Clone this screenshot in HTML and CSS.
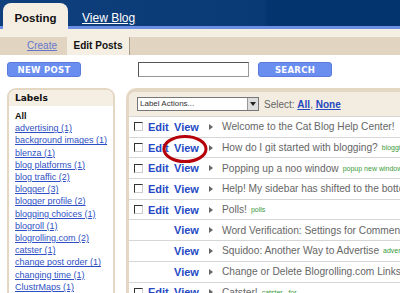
FILE: index.html
```html
<!DOCTYPE html>
<html lang="en">
<head>
    <meta charset="UTF-8">
    <title>Blogger - Edit Posts</title>
    <link rel="stylesheet" href="styles.css">
</head>
<body>
    <div class="topbar">
        <div class="tab active">Posting</div>
        <a class="tab tab-link" href="#">View Blog</a>
    </div>
    <div class="strip"></div>
    <div class="subnav">
        <a class="sub-link" href="#">Create</a>
        <div class="sub-tab">Edit Posts</div>
    </div>

    <div class="toolbar">
        <button class="btn">NEW POST</button>
        <input class="search-box" type="text">
        <button class="btn btn-search">SEARCH</button>
    </div>

    <div class="content">
        <div class="labels">
            <div class="labels-head">Labels</div>
            <ul class="label-list">
                <li class="all">All</li>
                <li><a href="#">advertising (1)</a></li>
                <li><a href="#">background images (1)</a></li>
                <li><a href="#">blenza (1)</a></li>
                <li><a href="#">blog platforms (1)</a></li>
                <li><a href="#">blog traffic (2)</a></li>
                <li><a href="#">blogger (3)</a></li>
                <li><a href="#">blogger profile (2)</a></li>
                <li><a href="#">blogging choices (1)</a></li>
                <li><a href="#">blogroll (1)</a></li>
                <li><a href="#">blogrolling.com (2)</a></li>
                <li><a href="#">catster (1)</a></li>
                <li><a href="#">change post order (1)</a></li>
                <li><a href="#">changing time (1)</a></li>
                <li><a href="#">ClustrMaps (1)</a></li>
            </ul>
        </div>

        <div class="posts">
            <div class="posts-head">
                <div class="select-box">Label Actions...<span class="drop"></span></div>
                <span class="select-txt">Select: <a href="#">All</a>, <a href="#">None</a></span>
            </div>
            <div class="row"><span class="cb"></span><a class="edit" href="#">Edit</a><a class="view" href="#">View</a><span class="arrow"></span><span class="title">Welcome to the Cat Blog Help Center!</span></div>
            <div class="row"><span class="cb"></span><a class="edit" href="#">Edit</a><a class="view" href="#">View</a><span class="arrow"></span><span class="title">How do I git started with blogging?</span><span class="tag">blogging</span></div>
            <div class="row"><span class="cb"></span><a class="edit" href="#">Edit</a><a class="view" href="#">View</a><span class="arrow"></span><span class="title">Popping up a noo window</span><span class="tag">popup new window</span></div>
            <div class="row"><span class="cb"></span><a class="edit" href="#">Edit</a><a class="view" href="#">View</a><span class="arrow"></span><span class="title">Help! My sidebar has shifted to the bottom</span></div>
            <div class="row"><span class="cb"></span><a class="edit" href="#">Edit</a><a class="view" href="#">View</a><span class="arrow"></span><span class="title">Polls!</span><span class="tag">polls</span></div>
            <div class="row"><span class="cb none"></span><span class="edit"></span><a class="view" href="#">View</a><span class="arrow"></span><span class="title">Word Verification: Settings for Comments</span></div>
            <div class="row"><span class="cb none"></span><span class="edit"></span><a class="view" href="#">View</a><span class="arrow"></span><span class="title">Squidoo: Another Way to Advertise</span><span class="tag">advertising</span></div>
            <div class="row"><span class="cb none"></span><span class="edit"></span><a class="view" href="#">View</a><span class="arrow"></span><span class="title">Change or Delete Blogrolling.com Links</span></div>
            <div class="row"><span class="cb"></span><a class="edit" href="#">Edit</a><a class="view" href="#">View</a><span class="arrow"></span><span class="title">Catster!</span><span class="tag">catster , for</span></div>
        </div>
    </div>

    <!-- red circle drawn over the second View link -->
    <svg class="circle-mark" width="50" height="32" viewBox="0 0 50 32">
        <ellipse cx="25" cy="16" rx="21" ry="12.5" fill="none" stroke="#b5000a" stroke-width="3"/>
    </svg>
</body>
</html>
```

FILE: styles.css
```css
body {
    margin: 0;
    background: #fff;
    font-family: "Liberation Sans", Arial, sans-serif;
    width: 400px;
    height: 293px;
    overflow: hidden;
    position: relative;
}

a {
    color: #2447c0;
}

.topbar {
    height: 26px;
    border-bottom: 3px solid #6a8fe3;
    background: linear-gradient(to right, #0f3f7c 0%, #0a3a76 66%, #04346d 67%, #04346d 100%);
    display: flex;
    align-items: flex-end;
    padding-left: 3px;
}

.tab {
    height: 20px;
    margin-bottom: -3px;
    padding-top: 6px;
    line-height: 18px;
    font-size: 12px;
}

.tab.active {
    width: 65px;
    background: #f5eee3;
    border-radius: 8px 8px 0 0;
    color: #111;
    text-align: center;
    font-weight: bold;
    font-size: 11.5px;
}

.tab-link {
    margin-left: 14px;
    color: #fff;
}

.strip {
    height: 8px;
    background: #f5eee3;
}

.subnav {
    height: 18px;
    background: #e1d5c1;
    display: flex;
    padding-left: 27px;
    font-size: 10px;
    line-height: 18px;
}

.sub-link {
    color: #6675cc;
}

.sub-tab {
    margin-left: 10px;
    width: 62px;
    background: #f5eee3;
    border-right: 1px solid #a89c8a;
    text-align: center;
    font-weight: bold;
    color: #111;
}

.toolbar {
    display: flex;
    margin: 7px 0 0 7px;
    height: 15px;
}

.btn {
    width: 74px;
    height: 15px;
    padding: 0;
    background: #6a8ef0;
    border: 1px solid #5a7bdc;
    border-radius: 3px;
    color: #fff;
    font-family: "DejaVu Sans", sans-serif;
    font-weight: bold;
    font-size: 8.5px;
    letter-spacing: 0.3px;
}

.search-box {
    margin-left: 57px;
    width: 111px;
    height: 15px;
    box-sizing: border-box;
    border: 1px solid #999;
    border-top-color: #555;
    border-left-color: #555;
    padding: 0;
}

.btn-search {
    margin-left: 9px;
}

.content {
    display: flex;
    margin-top: 11px;
    padding-left: 7px;
}

.labels {
    flex-shrink: 0;
    width: 104px;
    height: 205px;
    border: 2px solid #e4d8c4;
    border-bottom: none;
    border-radius: 9px 9px 0 0;
    background: #fff;
}

.labels-head {
    background: #f5eee3;
    height: 14px;
    padding: 2px 0 0 6px;
    font-family: "DejaVu Sans", sans-serif;
    font-size: 9px;
    font-weight: bold;
    line-height: 12px;
    color: #111;
    border-radius: 8px 8px 0 0;
}

.label-list {
    list-style: none;
    margin: 0;
    padding: 4px 0 0 6px;
    font-size: 9px;
    line-height: 12.2px;
    white-space: nowrap;
}

.label-list .all {
    font-weight: bold;
    color: #111;
}

.label-list a {
    color: #2f4fc4;
}

.posts {
    flex-shrink: 0;
    margin-left: 11px;
    width: 290px;
    height: 205px;
    border-top: 4px solid #e4d8c4;
    border-left: 3px solid #e4d8c4;
    border-radius: 10px 0 0 0;
    overflow: hidden;
}

.posts-head {
    height: 24px;
    background: #f3ece1;
    display: flex;
    align-items: center;
    padding-left: 8px;
    font-size: 10px;
}

.select-box {
    width: 118px;
    height: 12px;
    border: 1px solid #777;
    background: #fff;
    position: relative;
    font-size: 8px;
    line-height: 12px;
    padding-left: 2px;
    color: #333;
}

.drop {
    position: absolute;
    right: 0;
    top: 0;
    width: 10px;
    height: 12px;
    background: #ddd;
    border-left: 1px solid #999;
}

.drop::after {
    content: "";
    position: absolute;
    left: 2px;
    top: 4px;
    border-left: 3px solid transparent;
    border-right: 3px solid transparent;
    border-top: 4px solid #222;
}

.select-txt {
    margin-left: 5px;
    color: #666;
    white-space: nowrap;
}

.select-txt a {
    font-weight: bold;
}

.row {
    height: 19.7px;
    border-top: 1px solid #d6d6d6;
    display: flex;
    align-items: center;
    padding-left: 5px;
    white-space: nowrap;
    font-size: 10.2px;
}

.cb {
    width: 7px;
    height: 7px;
    border: 1px solid #ccc;
    border-top-color: #333;
    border-left-color: #333;
    margin-right: 5px;
    flex-shrink: 0;
}

.cb.none {
    border-color: transparent;
}

.edit, .view {
    font-weight: bold;
    font-size: 11px;
    text-decoration: none;
    color: #2549c4;
    flex-shrink: 0;
}

.edit {
    width: 26px;
}

.view {
    width: 35px;
}

.arrow {
    width: 0;
    height: 0;
    border-top: 3.5px solid transparent;
    border-bottom: 3.5px solid transparent;
    border-left: 4px solid #666;
    margin-right: 9px;
    flex-shrink: 0;
}

.title {
    color: #666;
}

.tag {
    margin-left: 4px;
    font-size: 7px;
    color: #3a9a3a;
}

.circle-mark {
    position: absolute;
    left: 160px;
    top: 133px;
}
```
